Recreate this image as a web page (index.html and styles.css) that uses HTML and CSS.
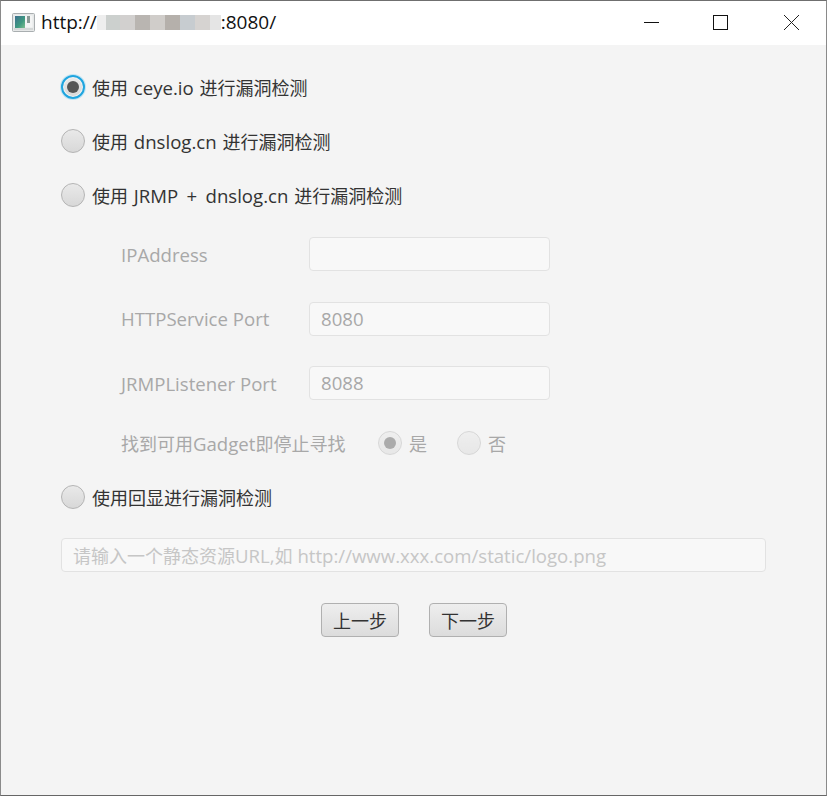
FILE: index.html
```html
<!DOCTYPE html>
<html lang="zh">
<head>
<meta charset="utf-8">
<title>Window</title>
<link rel="stylesheet" href="styles.css">
</head>
<body>
<div class="window">
  <header class="titlebar">
    <svg class="appicon" width="23" height="19" viewBox="0 0 23 19"><defs><linearGradient id="pic" x1="0" y1="0" x2="1" y2="1"><stop offset="0" stop-color="#3d6f8f"/><stop offset=".6" stop-color="#3f9a80"/><stop offset="1" stop-color="#7fbf90"/></linearGradient></defs><rect x=".5" y=".5" width="22" height="18" rx="1" fill="#e6e8e8" stroke="#a9aeb0"/><rect x="2.500" y="2.500" width="18" height="12" fill="#f4f5f5"/><rect x="3" y="3" width="10" height="12" fill="url(#pic)"/><rect x="15" y="3" width="3" height="7" fill="#8a9a96"/><rect x="2" y="15" width="19" height="2" fill="#d5d8d8"/></svg>
    <span class="url">http://</span>
    <span class="blur"><i class="b1"></i><i class="b2"></i><i class="b3"></i><i class="b4"></i><i class="b5"></i><i class="b6"></i><i class="b7"></i><i class="b8"></i><i class="b9"></i></span>
    <span class="url">:8080/</span>
    <div class="winbtns">
      <svg class="ctl ctl-min" width="15" height="15" viewBox="0 0 15 15"><path d="M0 7.500h15" stroke="#111" fill="none"/></svg>
      <svg class="ctl ctl-max" width="15" height="15" viewBox="0 0 15 15"><rect x=".5" y=".5" width="14" height="14" stroke="#111" fill="none"/></svg>
      <svg class="ctl ctl-close" width="15" height="15" viewBox="0 0 15 15"><path d="M0 0l15 15M15 0L0 15" stroke="#222" fill="none"/></svg>
    </div>
  </header>
  <main class="content">
    <label class="radio-row"><span class="radio focused"><i></i></span><span>使用<span class="l"> ceye.io </span>进行漏洞检测</span></label>
    <label class="radio-row"><span class="radio"></span><span>使用<span class="l"> dnslog.cn </span>进行漏洞检测</span></label>
    <label class="radio-row"><span class="radio"></span><span>使用<span class="l"> JRMP <span class="plus">+</span> dnslog.cn </span>进行漏洞检测</span></label>
    <section class="form">
      <div class="field"><span class="flabel l">IPAddress</span><span class="input"></span></div>
      <div class="field"><span class="flabel l">HTTPService Port</span><span class="input l">8080</span></div>
      <div class="field"><span class="flabel l">JRMPListener Port</span><span class="input l">8088</span></div>
      <div class="gadget"><span class="glabel">找到可用<span class="l">Gadget</span>即停止寻找</span>
        <span class="opt"><span class="radio dim"><i></i></span>是</span>
        <span class="opt"><span class="radio dim"></span>否</span>
      </div>
    </section>
    <label class="radio-row last"><span class="radio"></span><span>使用回显进行漏洞检测</span></label>
    <div class="urlinput">请输入一个静态资源<span class="l">URL,</span>如<span class="l"> http://www.xxx.com/static/logo.png</span></div>
    <div class="buttons"><button>上一步</button><button>下一步</button></div>
  </main>
</div>
</body>
</html>
```
FILE: styles.css
```css
*{box-sizing:border-box}
html,body{margin:0;padding:0}
body{width:827px;height:796px;overflow:hidden;font-family:"Open Sans","Noto Sans CJK SC",sans-serif;color:#333}
.window{width:827px;height:796px;border:1px solid #8a8a8a;border-top-color:#6f6f6f;border-bottom-color:#666;background:#f4f4f4;display:flex;flex-direction:column}
.titlebar{height:44px;background:#fff;display:flex;align-items:center;padding:0 0 2px 11px;color:#111}
.appicon{margin-right:6px;flex:none}
.url{font-family:"Open Sans","Noto Sans CJK SC",sans-serif;font-size:19px}
.blur{display:flex;width:124px;height:15px}
.blur i{display:block;height:15px}
.b1{width:9px;background:#eeeeee}.b2{width:14px;background:#ccd0ce}.b3{width:15px;background:#d2d0cf}.b4{width:15px;background:#b9b5b1}.b5{width:15px;background:#d0cdca}.b6{width:15px;background:#b5b0ab}.b7{width:15px;background:#c7ccd0}.b8{width:15px;background:#d6d3d1}.b9{width:11px;background:#e5e5e5}
.winbtns{margin-left:auto;display:flex;align-items:center;padding-right:27px}
.ctl{display:block;flex:none}
.ctl-max{margin-left:54px}
.ctl-close{margin-left:56px}
.content{flex:1;padding:24px 60px 0;font-size:18px}
.l{font-size:18.6px}
.radio-row .l{word-spacing:1px}
.plus{margin:0 2.500px}
.radio-row{display:flex;align-items:center;gap:7px;height:36px;margin-bottom:18px;color:#333}
.radio{width:24px;height:24px;border-radius:50%;background:linear-gradient(#e9e9e9,#d8d8d8);border:1px solid #b4b4b4;display:flex;align-items:center;justify-content:center;flex:none}
.radio i{width:12px;height:12px;border-radius:50%;background:#555;flex:none}
.radio.focused{border:2px solid #1fa5df;box-shadow:0 0 0 1px #bfe4f4,inset 0 0 0 1px #f2f2f2}
.radio.dim{opacity:.45}
.form{padding-left:60px;color:#a8a8a8;margin-top:24px}
.field{display:flex;align-items:center;height:34px;margin-bottom:30.500px}
.flabel{width:188px}
.input{width:241px;height:34px;border:1px solid #e2e2e2;border-radius:4px;background:#f8f8f8;padding:0 11px;line-height:32px;color:#a8a8a8}
.gadget{display:flex;align-items:center;height:24px}
.glabel{width:257px;flex:none}
.opt{display:flex;align-items:center;gap:7px;width:79px;flex:none}
.last{margin-top:24px}
.urlinput{width:705px;height:34px;border:1px solid #e2e2e2;border-radius:4px;background:#f8f8f8;padding:0 11px;line-height:33px;color:#c6c6c6;margin-top:23px}
.buttons{display:flex;justify-content:center;gap:30px;margin-top:31px;width:705px;padding-left:1px}
button{width:78px;height:34px;border:1px solid #b0b0b0;border-radius:4px;background:linear-gradient(#eeeeee,#dcdcdc);font:18px "Noto Sans CJK SC",sans-serif;color:#333;padding:0}
```
